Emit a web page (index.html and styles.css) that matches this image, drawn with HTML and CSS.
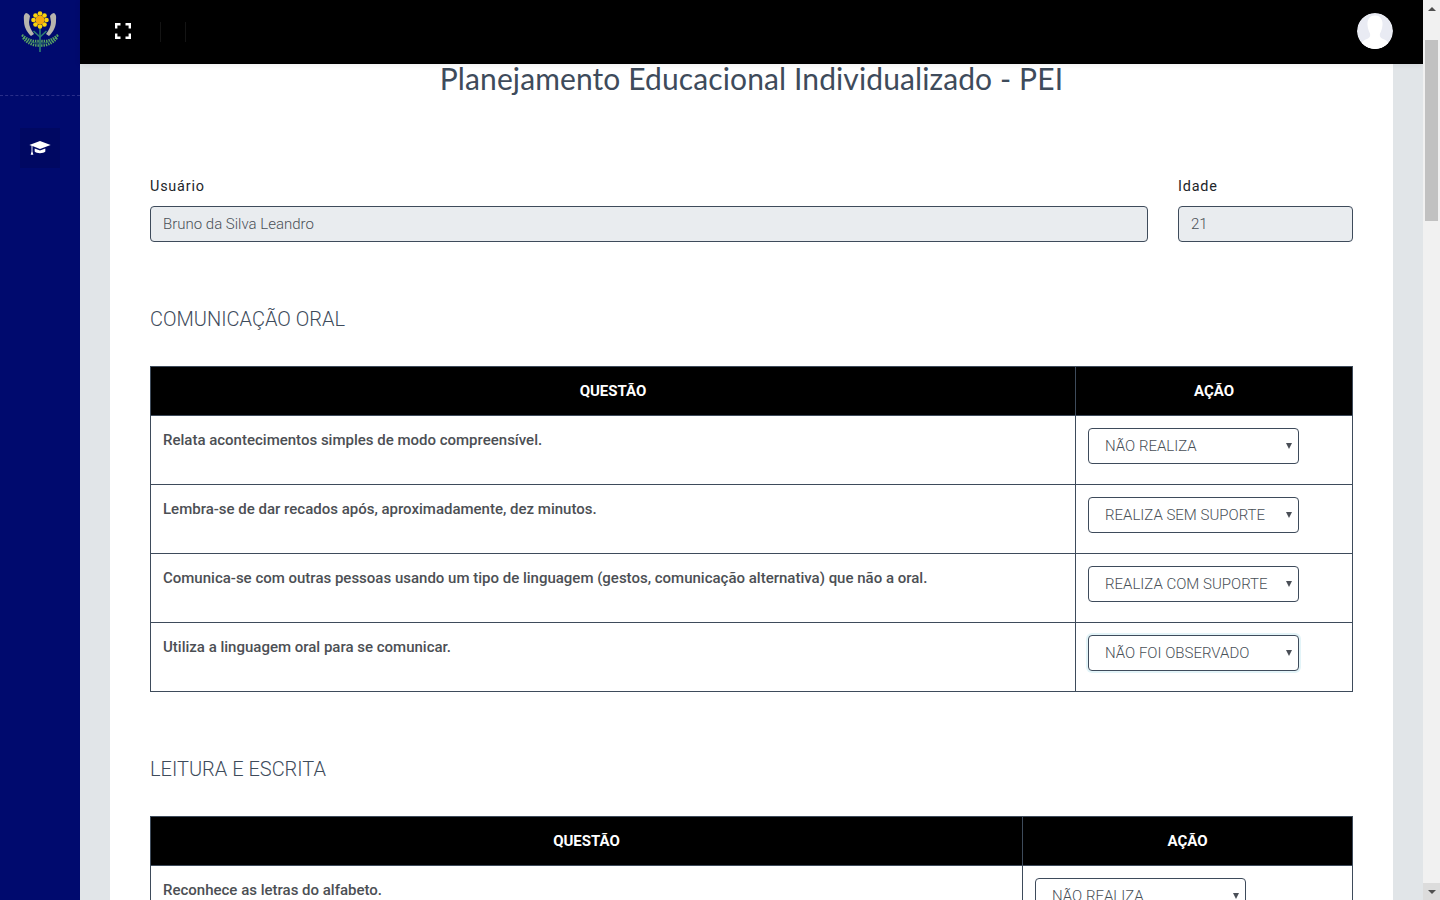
FILE: index.html
```html
<!DOCTYPE html>
<html lang="pt-BR">
<head>
<meta charset="utf-8">
<title>PEI</title>
<link rel="stylesheet" href="styles.css">
</head>
<body>
<div class="app">
  <aside class="sidebar">
    <div class="brand">
      <svg class="logo" viewBox="0 0 40 42" width="40" height="42">
        <path d="M6 3 C3 5 4 8 4 11 C4 16 6 21 11 26 L14 24 C11 20 9 16 9 12 L10 6 C9 4 7 3 6 3Z" fill="#b7b5ae"/>
        <path d="M34 3 C37 5 36 8 36 11 C36 16 34 21 29 26 L26 24 C29 20 31 16 31 12 L30 6 C31 4 33 3 34 3Z" fill="#b7b5ae"/>
        <path d="M20 16 V42" stroke="#2f7f72" stroke-width="1.600" fill="none"/>
        <path d="M13.500 21 L20 27 L26.500 21" stroke="#2f7f72" stroke-width="1.500" fill="none"/>
        <path d="M2 26 Q10 34 19.500 33 M38 26 Q30 34 20.500 33" stroke="#2f7f62" stroke-width="1" fill="none"/>
        <path d="M2 25 Q10 32 19 31 M38 25 Q30 32 21 31" stroke="#5aa564" stroke-width="2.500" stroke-dasharray="1.400 1" fill="none"/>
        <path d="M3 28 Q10 36 19 35.500 M37 28 Q30 36 21 35.500" stroke="#5aa564" stroke-width="2.500" stroke-dasharray="1.400 1" fill="none"/>
        <g fill="#fbd40c">
          <circle cx="20" cy="3.500" r="2.300"/><circle cx="20" cy="16.500" r="2.300"/><circle cx="13.500" cy="10" r="2.300"/><circle cx="26.500" cy="10" r="2.300"/>
          <circle cx="15.500" cy="5.500" r="2.300"/><circle cx="24.500" cy="5.500" r="2.300"/><circle cx="15.500" cy="14.500" r="2.300"/><circle cx="24.500" cy="14.500" r="2.300"/>
        </g>
        <circle cx="20" cy="10" r="4.500" fill="#f5a90a"/>
      </svg>
    </div>
    <nav class="side-nav">
      <a class="side-link">
        <svg viewBox="0 0 24 18" width="22" height="16"><path fill="#fff" d="M12 1 L24 5.500 L12 10 L3.500 6.800 V13 L4.500 16.500 H1.500 L2.500 13 V6.400 L0 5.500Z M6 9.500 L12 11.800 L18 9.500 V13 C16 15.500 8 15.500 6 13Z"/></svg>
      </a>
    </nav>
  </aside>
  <div class="main">
    <header class="navbar">
      <svg class="expand" viewBox="0 0 16 16" width="16" height="16"><path fill="none" stroke="#fff" stroke-width="2.400" d="M1.200 5.500 V1.200 H5.500 M10.500 1.200 H14.800 V5.500 M14.800 10.500 V14.800 H10.500 M5.500 14.800 H1.200 V10.500"/></svg>
      <span class="nav-sep first"></span>
      <span class="nav-sep"></span>
      <div class="avatar">
        <svg viewBox="0 0 36 36" width="36" height="36"><circle cx="18" cy="18" r="18" fill="#e9ebf3"/><path fill="#fff" d="M18 2.500 C23 2.500 26 6.500 25.500 12 C25.200 16 24 18.500 23 20.500 C22.500 23 23 24.500 25 25.500 C27 26.500 30 27 31.500 30 A18 18 0 0 1 4.500 30 C6 27 9 26.500 11 25.500 C13 24.500 13.500 23 13 20.500 C12 18.500 10.800 16 10.500 12 C10 6.500 13 2.500 18 2.500Z"/></svg>
      </div>
    </header>
    <main class="content">
      <section class="card">
        <h1 class="title">Planejamento Educacional Individualizado - PEI</h1>
        <div class="fields">
          <div class="field grow">
            <label class="label">Usuário</label>
            <input class="input" value="Bruno da Silva Leandro" disabled>
          </div>
          <div class="field age">
            <label class="label">Idade</label>
            <input class="input" value="21" disabled>
          </div>
        </div>
        <h2 class="section-title">COMUNICAÇÃO ORAL</h2>
        <table class="grid">
          <thead><tr><th>QUESTÃO</th><th class="act-a">AÇÃO</th></tr></thead>
          <tbody>
            <tr><td>Relata acontecimentos simples de modo compreensível.</td><td><span class="pick-wrap"><select class="pick"><option>NÃO REALIZA</option></select></span></td></tr>
            <tr><td>Lembra-se de dar recados após, aproximadamente, dez minutos.</td><td><span class="pick-wrap"><select class="pick"><option>REALIZA SEM SUPORTE</option></select></span></td></tr>
            <tr><td>Comunica-se com outras pessoas usando um tipo de linguagem (gestos, comunicação alternativa) que não a oral.</td><td><span class="pick-wrap"><select class="pick"><option>REALIZA COM SUPORTE</option></select></span></td></tr>
            <tr><td>Utiliza a linguagem oral para se comunicar.</td><td><span class="pick-wrap"><select class="pick focused"><option>NÃO FOI OBSERVADO</option></select></span></td></tr>
          </tbody>
        </table>
        <h2 class="section-title">LEITURA E ESCRITA</h2>
        <table class="grid">
          <thead><tr><th>QUESTÃO</th><th class="act-b">AÇÃO</th></tr></thead>
          <tbody>
            <tr><td>Reconhece as letras do alfabeto.</td><td><span class="pick-wrap"><select class="pick"><option>NÃO REALIZA</option></select></span></td></tr>
          </tbody>
        </table>
      </section>
    </main>
  </div>
  <div class="scrollbar">
    <span class="arrow up"></span>
    <div class="track"><span class="thumb"></span></div>
    <span class="arrow down"></span>
  </div>
</div>
</body>
</html>
```

FILE: styles.css
```css
* { box-sizing: border-box; }
html, body { margin: 0; height: 100%; overflow: hidden; }
body { font-family: Roboto, "Liberation Sans", sans-serif; color: #3e4b5b; background: #e1e5e8; }
.app { display: flex; height: 100vh; overflow: hidden; }

.sidebar { width: 80px; flex: none; background: #000a6e; display: flex; flex-direction: column; align-items: center; }
.brand { width: 100%; height: 96px; padding-top: 10px; border-bottom: 1px dashed #2a2f8a; display: flex; justify-content: center; align-items: flex-start; }
.side-nav { padding-top: 32px; }
.side-link { width: 40px; height: 40px; background: #000862; display: flex; align-items: center; justify-content: center; }

.main { flex: 1; min-width: 0; display: flex; flex-direction: column; }
.navbar { height: 64px; flex: none; background: #000; display: flex; align-items: center; padding: 0 30px 2px 35px; box-shadow: 0 1px 6px rgba(0, 0, 0, .08); position: relative; z-index: 1; }
.expand { margin-right: 29px; }
.nav-sep { width: 1px; height: 20px; background: #141414; margin: 2px 24px 0 0; }
.avatar { margin-left: auto; width: 36px; height: 36px; border-radius: 50%; overflow: hidden; }
.avatar svg { display: block; }

.content { flex: 1; min-height: 0; padding: 0 30px; }
.card { background: #fff; padding: 0 40px; height: 100%; }

.title { margin: 0; font-family: Lato, sans-serif; font-weight: 400; font-size: 30px; line-height: 28px; letter-spacing: .11px; text-align: center; color: #3e4b5b; }

.fields { display: flex; gap: 30px; margin-top: 84px; }
.field { display: flex; flex-direction: column; }
.grow { flex: 1; }
.age { width: 175px; }
.label { font-size: 14.4px; line-height: 21px; letter-spacing: .8px; color: #212529; margin-bottom: 9px; }
.input { height: 36px; width: 100%; border: 1px solid #3e4b5b; border-radius: 4px; padding: 0 12px; background: #e9ecef; font: 300 15px Roboto, sans-serif; color: #495057; }

.section-title { margin: 65px 0 35px; font-weight: 300; font-size: 20px; line-height: 24px; color: #3e4b5b; }

.grid { width: 100%; border-collapse: collapse; table-layout: fixed; }
.grid th, .grid td { border: 1px solid #3e4b5b; }
.grid th { height: 49px; background: #000; color: #fff; font-size: 15px; font-weight: 700; text-align: center; padding: 0 12px; }
.grid td { height: 69px; padding: 12px; vertical-align: top; font-size: 15px; font-weight: 500; line-height: 24px; color: #4c4f54; }
.act-a { width: 277px; }
.act-b { width: 330px; }

.pick-wrap { display: block; position: relative; width: 211px; height: 36px; }
.pick-wrap::after { content: ""; position: absolute; right: 7px; top: 15px; border-left: 3px solid transparent; border-right: 3px solid transparent; border-top: 6px solid #4a4f57; pointer-events: none; }
.pick { display: block; width: 100%; height: 36px; padding: 0 16px; background: #fff; border: 1px solid #3e4b5b; border-radius: 4px; appearance: none; font: 300 15px Roboto, sans-serif; color: #495057; }
.focused { box-shadow: 0 0 0 2px #e3f4f8; }

.scrollbar { width: 17px; flex: none; background: #f1f1f1; display: flex; flex-direction: column; position: relative; z-index: 2; }
.arrow { height: 17px; flex: none; display: flex; align-items: center; justify-content: center; }
.arrow.down { background: #dcdcdc; }
.arrow::before { content: ""; border-left: 4px solid transparent; border-right: 4px solid transparent; }
.arrow.up::before { border-bottom: 4px solid #505050; }
.arrow.down::before { border-top: 4px solid #505050; }
.track { flex: 1; padding-top: 23px; display: flex; justify-content: center; }
.thumb { width: 13px; height: 181px; background: #c1c1c1; }
```
